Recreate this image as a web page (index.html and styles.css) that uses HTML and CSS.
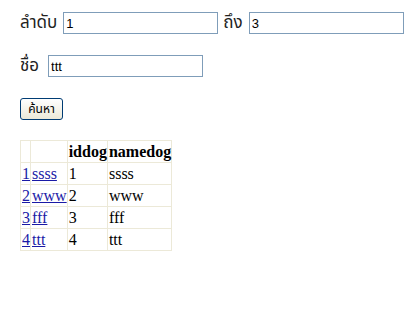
FILE: index.html
```html
<!DOCTYPE html>
<html lang="th">
<head>
  <meta charset="UTF-8">
  <title>ค้นหา</title>
  <link rel="stylesheet" href="styles.css">
</head>
<body>
  <form class="search-form">
    <div class="row">
      <label class="label" for="from">ลำดับ</label>
      <input class="field" id="from" type="text" value="1">
      <label class="label label-to" for="to">ถึง</label>
      <input class="field" id="to" type="text" value="3">
    </div>
    <div class="row">
      <label class="label" for="name">ชื่อ</label>
      <input class="field field-name" id="name" type="text" value="ttt">
    </div>
    <div class="row">
      <button class="search-button" type="button">ค้นหา</button>
    </div>
  </form>

  <table class="result">
    <tr>
      <th></th>
      <th></th>
      <th>iddog</th>
      <th>namedog</th>
    </tr>
    <tr>
      <td><a href="#">1</a></td>
      <td><a href="#">ssss</a></td>
      <td>1</td>
      <td>ssss</td>
    </tr>
    <tr>
      <td><a href="#">2</a></td>
      <td><a href="#">www</a></td>
      <td>2</td>
      <td>www</td>
    </tr>
    <tr>
      <td><a href="#">3</a></td>
      <td><a href="#">fff</a></td>
      <td>3</td>
      <td>fff</td>
    </tr>
    <tr>
      <td><a href="#">4</a></td>
      <td><a href="#">ttt</a></td>
      <td>4</td>
      <td>ttt</td>
    </tr>
  </table>
</body>
</html>
```

FILE: styles.css
```css
body {
  margin: 0;
  padding: 12px 20px;
  background: #fff;
  color: #000;
  font-family: "Liberation Serif", "Times New Roman", serif;
}

.search-form {
  display: flex;
  flex-direction: column;
  gap: 21px;
  margin: 0 0 20px;
}

.row {
  display: flex;
  align-items: center;
  height: 22px;
}

.label {
  font-family: Tahoma, "Noto Sans Thai", "DejaVu Sans", sans-serif;
  font-size: 17px;
  color: #222;
  margin-right: 6px;
}

.label-to {
  margin-left: 5px;
}

.field {
  box-sizing: border-box;
  width: 155px;
  height: 22px;
  margin: 0;
  padding: 1px 2px;
  border: 1px solid #7f9db9;
  font-family: "Liberation Sans", Arial, sans-serif;
  font-size: 13px;
  color: #000;
}

.field-name {
  margin-left: 3px;
}

.search-button {
  box-sizing: border-box;
  width: 43px;
  height: 22px;
  padding: 0;
  border: 1px solid #003c74;
  border-radius: 3px;
  background: linear-gradient(#ffffff, #ece9d8);
  font-family: Tahoma, "Noto Sans Thai", "DejaVu Sans", sans-serif;
  font-size: 12px;
  color: #000;
}

.result {
  border-collapse: collapse;
  border: 1px solid #aca899;
  border-top-color: #f1efe2;
  border-left-color: #f1efe2;
  font-size: 16px;
}

.result th,
.result td {
  border: 1px solid #ece9d8;
  padding: 1px 0 1px 1px;
  height: 19px;
  text-align: left;
}

.result a {
  color: #1a1aa6;
}
```
